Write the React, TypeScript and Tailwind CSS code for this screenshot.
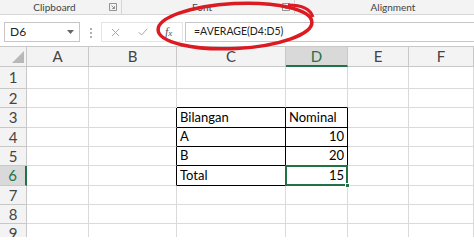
import React from 'react';

const cols = ['A', 'B', 'C', 'D', 'E', 'F'];
const rows = [1, 2, 3, 4, 5, 6, 7, 8, 9];

const data: Record<string, { v: string; right?: boolean }> = {
  C3: { v: 'Bilangan' },
  D3: { v: 'Nominal' },
  C4: { v: 'A' },
  D4: { v: '10', right: true },
  C5: { v: 'B' },
  D5: { v: '20', right: true },
  C6: { v: 'Total' },
  D6: { v: '15', right: true },
};

// which grid borders belong to the black-bordered table C3:D6
const rightBlack = (c: string, r: number) => r >= 3 && r <= 6 && (c === 'B' || c === 'C' || c === 'D');
const bottomBlack = (c: string, r: number) => r >= 2 && r <= 6 && (c === 'C' || c === 'D');

const Launcher = () => (
  <svg width="8" height="8" viewBox="0 0 8 8" className="text-[#7a7a7a]">
    <path d="M0.5 0.5h7v7h-7z" fill="none" stroke="currentColor" strokeWidth="0.8" />
    <path d="M2.5 2.5l3 3M5.5 3.2v2.3H3.2" fill="none" stroke="currentColor" strokeWidth="0.8" />
  </svg>
);

export default function App() {
  return (
    <div className="relative w-[474px] h-[237px] overflow-hidden bg-white font-['Lato','Liberation_Sans',sans-serif]">
      {/* Ribbon group labels */}
      <div className="flex h-[15px] bg-[#f3f3f3] border-b border-[#d6d6d6] text-[10px] text-[#444] overflow-hidden">
        <div className="flex w-[122px] shrink-0 items-center border-r border-[#d6d6d6]">
          <span className="flex-1 text-center">Clipboard</span>
          <span className="w-[12px] flex items-center"><Launcher /></span>
        </div>
        <div className="flex w-[173px] shrink-0 items-center border-r border-[#d6d6d6]">
          <span className="flex-1 text-center">Font</span>
          <span className="w-[12px] flex items-center"><Launcher /></span>
        </div>
        <div className="flex w-[196px] shrink-0 items-center">
          <span className="flex-1 text-center">Alignment</span>
        </div>
      </div>

      {/* Formula bar */}
      <div className="flex items-start h-[31px] pt-[7px] bg-white">
        <div className="ml-[4px] flex items-center w-[76px] h-[20px] border border-[#c6c6c6] bg-white pl-[5px] pr-[5px] text-[12px] text-[#222]">
          <span className="flex-1">D6</span>
          <svg width="7" height="4" viewBox="0 0 7 4">
            <path d="M0 0h7L3.5 4z" fill="#666" />
          </svg>
        </div>
        <div className="ml-[10px] mt-[6px] flex flex-col gap-[2px]">
          <span className="w-[2px] h-[2px] bg-[#b0b0b0]" />
          <span className="w-[2px] h-[2px] bg-[#b0b0b0]" />
          <span className="w-[2px] h-[2px] bg-[#b0b0b0]" />
        </div>
        <div className="ml-[9px] flex items-center w-[82px] h-[20px] border border-[#e3e3e3]">
          <span className="ml-[9px] flex w-[9px] justify-center">
            <svg width="9" height="9" viewBox="0 0 9 9">
              <path d="M1 1l7 7M8 1L1 8" stroke="#a8a8a8" strokeWidth="1" />
            </svg>
          </span>
          <span className="ml-[18px] flex w-[10px] justify-center">
            <svg width="10" height="8" viewBox="0 0 10 8">
              <path d="M0.8 4.2l2.8 2.8L9.2 0.8" fill="none" stroke="#a8a8a8" strokeWidth="1" />
            </svg>
          </span>
          <span className="ml-[17px] text-[12px] italic text-[#555] font-['Liberation_Serif',serif] leading-none">
            f<span className="text-[9px]">x</span>
          </span>
        </div>
        <div className="ml-[2px] flex items-center flex-1 h-[20px] border border-[#c6c6c6] border-r-0 bg-white pl-[8px] text-[10.5px] text-[#222]">
          =AVERAGE(D4:D5)
        </div>
      </div>

      {/* Sheet grid */}
      <div className="grid grid-cols-[27px_62px_88px_109px_62px_61px_65px] grid-rows-[21px_22px_19px_20px_19px_19px_20px_19px_19px_19px] text-[13px] text-black">
        {/* corner */}
        <div className="flex items-end justify-end bg-[#f3f3f3] border-t border-r border-b border-[#c8c8c8] pr-[2px] pb-[3px]">
          <svg width="12" height="12" viewBox="0 0 12 12">
            <path d="M12 0V12H0z" fill="#b8b8b8" />
          </svg>
        </div>
        {cols.map((c) =>
          c === 'D' ? (
            <div
              key={c}
              className="flex items-center justify-center bg-[#d9d9d9] border-t border-r border-[#c8c8c8] border-b-2 border-b-[#217346] text-[15px] text-[#217346]"
            >
              {c}
            </div>
          ) : (
            <div
              key={c}
              className="flex items-center justify-center bg-[#f3f3f3] border-t border-r border-b border-[#c8c8c8] text-[15px] text-[#444]"
            >
              {c}
            </div>
          )
        )}
        {rows.map((r) => (
          <React.Fragment key={r}>
            {r === 6 ? (
              <div className="flex items-center justify-center bg-[#d9d9d9] border-b border-[#c8c8c8] border-r-2 border-r-[#217346] text-[15px] text-[#217346]">
                {r}
              </div>
            ) : (
              <div className="flex items-center justify-center bg-[#f3f3f3] border-r border-b border-[#c8c8c8] text-[15px] text-[#444]">
                {r}
              </div>
            )}
            {cols.map((c) => {
              const id = `${c}${r}`;
              const cell = data[id];
              const rb = rightBlack(c, r) ? 'border-r-black' : 'border-r-[#dadada]';
              const bb = bottomBlack(c, r) ? 'border-b-black' : 'border-b-[#dadada]';
              const align = cell?.right ? 'justify-end pr-[3px]' : 'justify-start pl-[3px]';
              return (
                <div key={id} className={`relative flex items-center border-r border-b ${rb} ${bb} ${align}`}>
                  {cell?.v}
                  {id === 'D6' && (
                    <>
                      <div className="absolute -left-[1px] -top-[1px] -right-[1px] -bottom-[1px] z-10 border-2 border-[#217346]" />
                      <div className="absolute -right-[3px] -bottom-[3px] z-20 w-[5px] h-[5px] bg-[#217346] border border-white" />
                    </>
                  )}
                </div>
              );
            })}
          </React.Fragment>
        ))}
      </div>

      {/* Red hand-drawn annotation */}
      <svg className="pointer-events-none absolute left-0 top-0" width="474" height="60" viewBox="0 0 474 60">
        <ellipse cx="235" cy="26" rx="77" ry="22.5" transform="rotate(-3 235 26)" fill="none" stroke="#dc1a22" strokeWidth="3.5" />
        <path d="M288 5 Q309 5 313 17" fill="none" stroke="#dc1a22" strokeWidth="3" />
      </svg>
    </div>
  );
}
